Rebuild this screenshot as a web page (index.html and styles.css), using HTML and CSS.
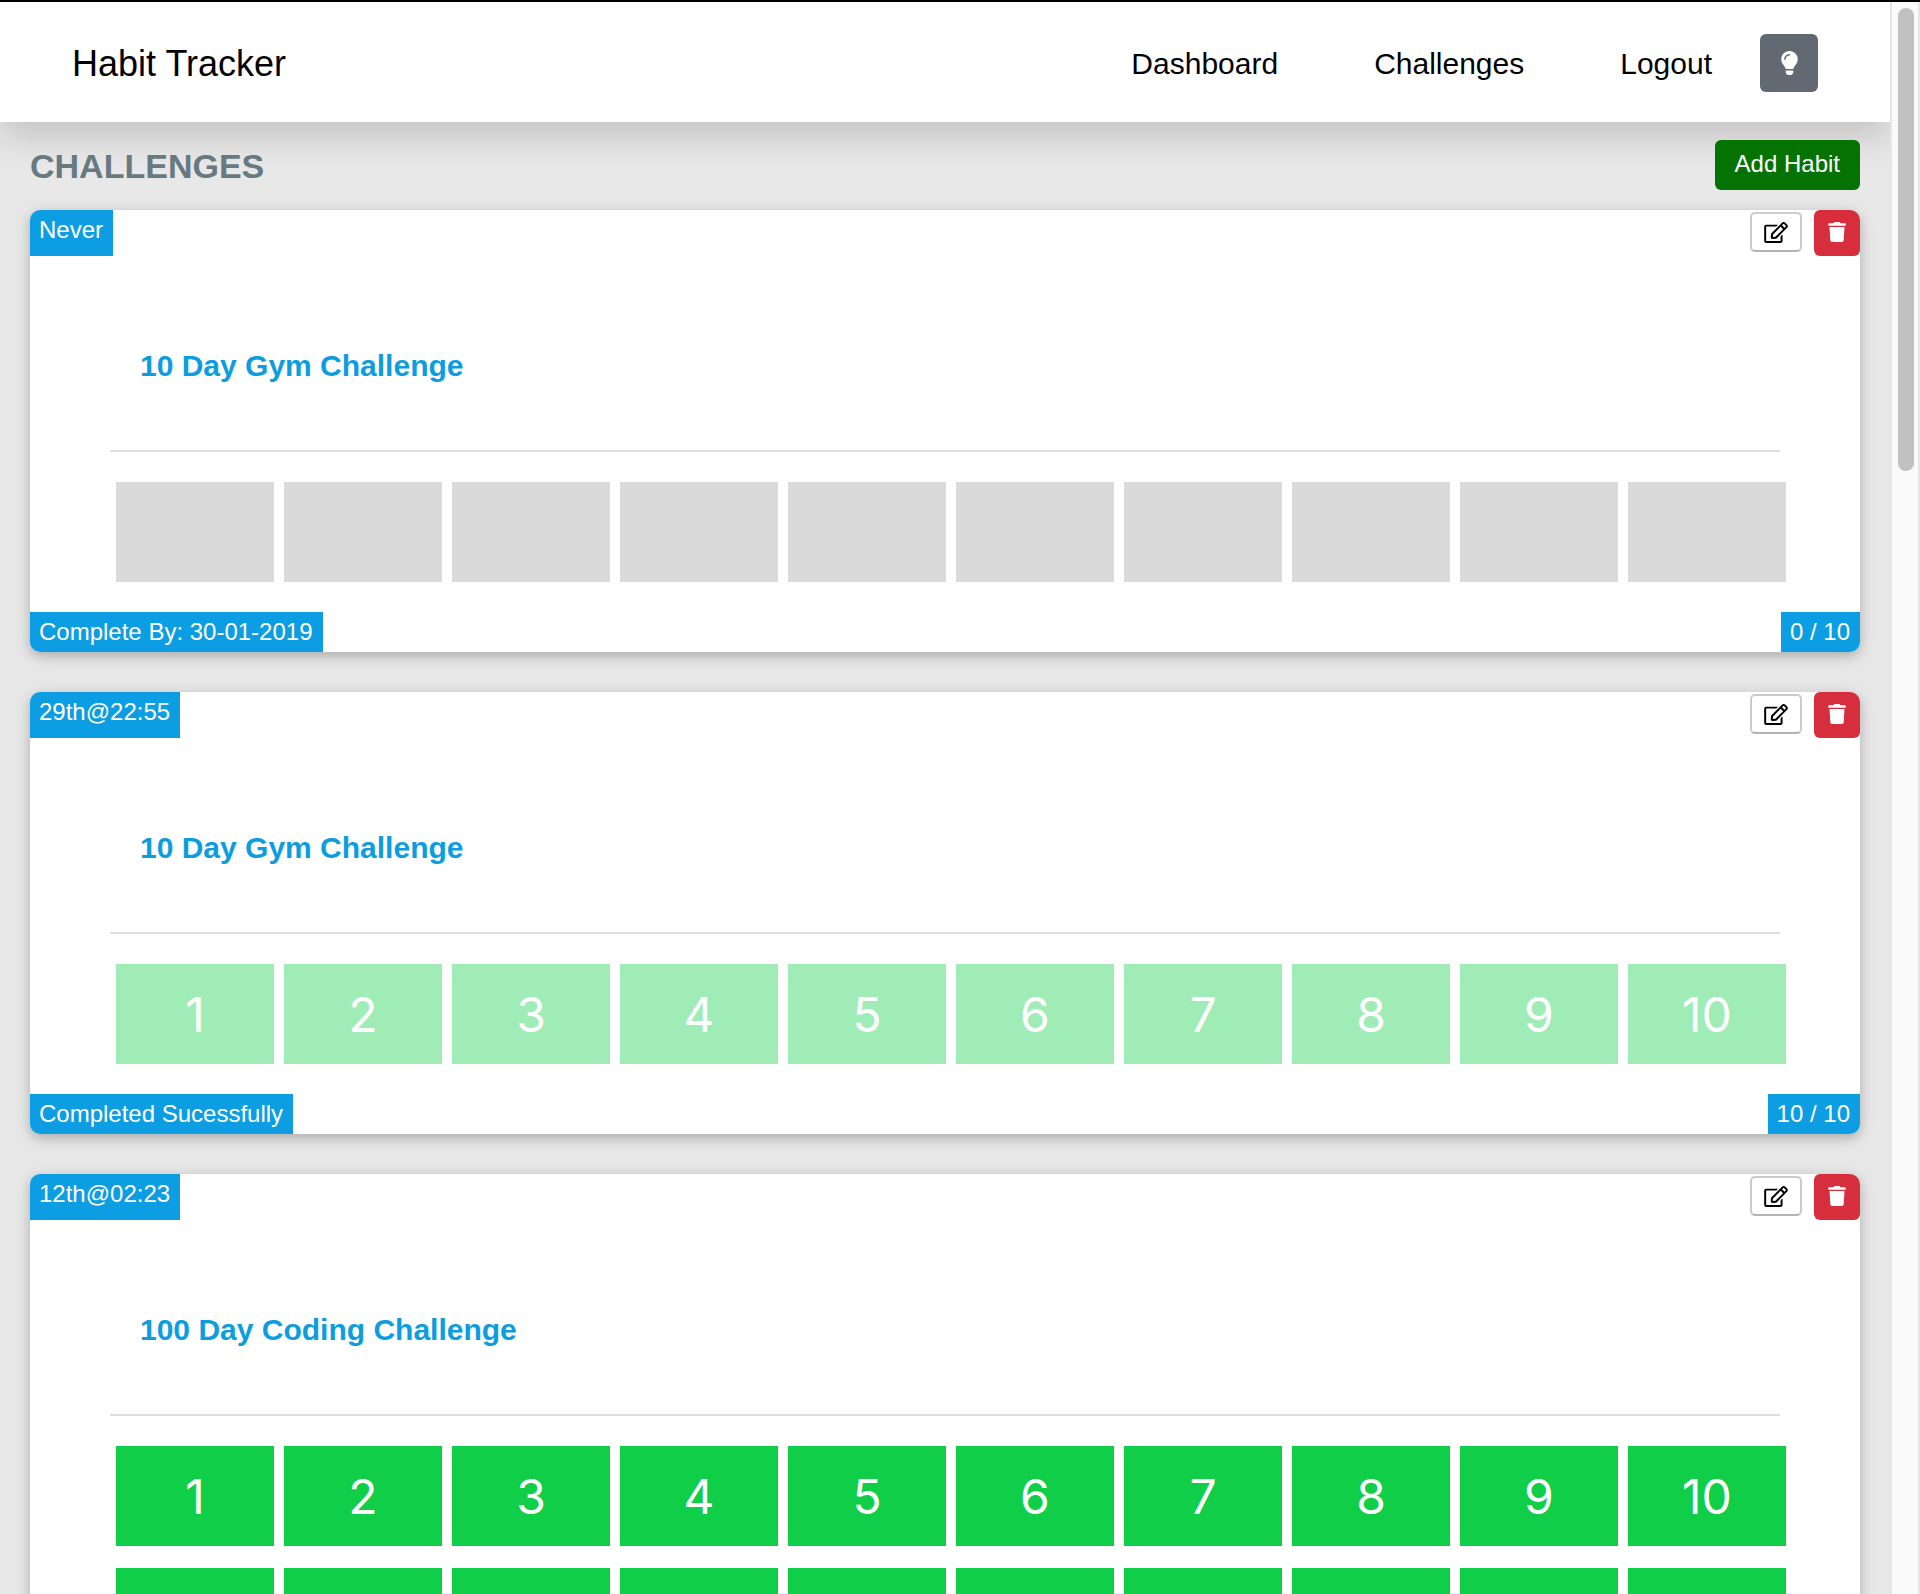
FILE: index.html
```
<!DOCTYPE html>
<html lang="en">
<head>
<meta charset="utf-8">
<title>Habit Tracker</title>
<link rel="stylesheet" href="styles.css">
</head>
<body>
<svg class="sprite" aria-hidden="true">
  <symbol id="icon-bulb" viewBox="0 0 352 512"><path d="M96.06 454.35c.01 6.29 1.87 12.45 5.36 17.69l17.09 25.69a31.99 31.99 0 0 0 26.64 14.28h61.71a31.99 31.99 0 0 0 26.64-14.28l17.09-25.69a31.989 31.989 0 0 0 5.36-17.69l.04-38.35H96.01l.05 38.35zM0 176c0 44.37 16.45 84.85 43.56 115.78 16.52 18.85 42.36 58.23 52.21 91.45.04.26.07.52.11.78h160.24c.04-.26.07-.51.11-.78 9.85-33.22 35.69-72.6 52.21-91.45C335.55 260.85 352 220.37 352 176 352 78.61 272.91-.3 175.45 0 73.44.31 0 82.97 0 176zm176-80c-44.11 0-80 35.89-80 80 0 8.84-7.16 16-16 16s-16-7.16-16-16c0-61.76 50.24-112 112-112 8.84 0 16 7.16 16 16s-7.16 16-16 16z"/></symbol>
  <symbol id="icon-edit" viewBox="0 0 576 512"><path d="M402.3 344.9l32-32c5-5 13.7-1.5 13.7 5.7V464c0 26.5-21.5 48-48 48H48c-26.5 0-48-21.5-48-48V112c0-26.5 21.5-48 48-48h273.5c7.1 0 10.7 8.6 5.7 13.7l-32 32c-1.5 1.5-3.5 2.3-5.7 2.3H48v352h352V350.5c0-2.1.8-4.1 2.3-5.6zm156.6-201.8L296.3 405.7l-90.4 10c-26.2 2.9-48.5-19.2-45.6-45.6l10-90.4L432.9 17.1c22.9-22.9 59.9-22.9 82.7 0l43.2 43.2c22.9 22.9 22.9 60 .1 82.8zM460.1 174L402 115.9 216.2 301.8l-7.3 65.3 65.3-7.3L460.1 174zm64.8-79.7l-43.2-43.2c-4.1-4.1-10.8-4.1-14.8 0L436 82l58.1 58.1 30.9-30.9c4-4.2 4-10.8-.1-14.9z"/></symbol>
  <symbol id="icon-trash" viewBox="0 0 448 512"><path d="M432 32H312l-9.4-18.7A24 24 0 0 0 281.1 0H166.8a23.72 23.72 0 0 0-21.4 13.3L136 32H16A16 16 0 0 0 0 48v32a16 16 0 0 0 16 16h416a16 16 0 0 0 16-16V48a16 16 0 0 0-16-16zM53.2 467a48 48 0 0 0 47.9 45h245.8a48 48 0 0 0 47.9-45L416 128H32z"/></symbol>
</svg>
<div class="app">
  <div class="view">
    <header class="navbar">
      <a class="brand" href="#">Habit Tracker</a>
      <nav class="nav">
        <a class="nav-link" href="#">Dashboard</a>
        <a class="nav-link" href="#">Challenges</a>
        <a class="nav-link" href="#">Logout</a>
        <button class="theme-button" type="button" aria-label="Toggle theme"><svg class="icon-bulb"><use href="#icon-bulb"/></svg></button>
      </nav>
    </header>
    <main class="content">
      <div class="heading-row">
        <h1 class="heading">CHALLENGES</h1>
        <button class="add-button" type="button">Add Habit</button>
      </div>

      <article class="card">
        <div class="card-top">
          <span class="tag tag-top">Never</span>
          <div class="actions">
            <button class="edit-button" type="button" aria-label="Edit"><svg class="icon-edit"><use href="#icon-edit"/></svg></button>
            <button class="delete-button" type="button" aria-label="Delete"><svg class="icon-trash"><use href="#icon-trash"/></svg></button>
          </div>
        </div>
        <h2 class="card-title">10 Day Gym Challenge</h2>
        <div class="days">
          <div class="day"></div><div class="day"></div><div class="day"></div><div class="day"></div><div class="day"></div>
          <div class="day"></div><div class="day"></div><div class="day"></div><div class="day"></div><div class="day"></div>
        </div>
        <div class="card-bottom">
          <span class="tag">Complete By: 30-01-2019</span>
          <span class="tag">0 / 10</span>
        </div>
      </article>

      <article class="card">
        <div class="card-top">
          <span class="tag tag-top">29th@22:55</span>
          <div class="actions">
            <button class="edit-button" type="button" aria-label="Edit"><svg class="icon-edit"><use href="#icon-edit"/></svg></button>
            <button class="delete-button" type="button" aria-label="Delete"><svg class="icon-trash"><use href="#icon-trash"/></svg></button>
          </div>
        </div>
        <h2 class="card-title">10 Day Gym Challenge</h2>
        <div class="days days-finished">
          <div class="day">1</div><div class="day">2</div><div class="day">3</div><div class="day">4</div><div class="day">5</div>
          <div class="day">6</div><div class="day">7</div><div class="day">8</div><div class="day">9</div><div class="day">10</div>
        </div>
        <div class="card-bottom">
          <span class="tag">Completed Sucessfully</span>
          <span class="tag">10 / 10</span>
        </div>
      </article>

      <article class="card">
        <div class="card-top">
          <span class="tag tag-top">12th@02:23</span>
          <div class="actions">
            <button class="edit-button" type="button" aria-label="Edit"><svg class="icon-edit"><use href="#icon-edit"/></svg></button>
            <button class="delete-button" type="button" aria-label="Delete"><svg class="icon-trash"><use href="#icon-trash"/></svg></button>
          </div>
        </div>
        <h2 class="card-title">100 Day Coding Challenge</h2>
        <div class="days days-active">
          <div class="day">1</div><div class="day">2</div><div class="day">3</div><div class="day">4</div><div class="day">5</div>
          <div class="day">6</div><div class="day">7</div><div class="day">8</div><div class="day">9</div><div class="day">10</div>
          <div class="day"></div><div class="day"></div><div class="day"></div><div class="day"></div><div class="day"></div>
          <div class="day"></div><div class="day"></div><div class="day"></div><div class="day"></div><div class="day"></div>
        </div>
      </article>
    </main>
  </div>
  <div class="scroll-track"><div class="scroll-thumb"></div></div>
</div>
</body>
</html>
```
FILE: styles.css
```
* {
  box-sizing: border-box;
}

body {
  margin: 0;
  background: #e8e8e8;
  font-family: "Liberation Sans", Arial, sans-serif;
}

button {
  margin: 0;
  padding: 0;
  border: 0;
  font-family: inherit;
}

.sprite {
  display: none;
}

.app {
  display: flex;
  height: 100vh;
  border-top: 2px solid #000;
  overflow: hidden;
}

.view {
  flex: 1;
  min-width: 0;
  overflow: hidden;
}

/* Navigation */
.navbar {
  display: flex;
  align-items: center;
  justify-content: space-between;
  height: 120px;
  padding: 2px 72px 0;
  background: #fff;
  box-shadow: 0 16px 32px rgba(0, 0, 0, 0.15);
}

.brand {
  padding-top: 2px;
  color: #000;
  font-size: 36px;
  line-height: 44px;
  text-decoration: none;
}

.nav {
  display: flex;
  align-items: center;
}

.nav-link {
  padding: 2px 48px 0;
  color: #000;
  font-size: 30px;
  line-height: 44px;
  text-decoration: none;
}

.theme-button {
  display: flex;
  align-items: center;
  justify-content: center;
  width: 58px;
  height: 58px;
  border-radius: 6px;
  background: #626972;
  color: #fff;
}

.icon-bulb {
  width: 17px;
  height: 24px;
  fill: currentColor;
}

/* Page heading */
.content {
  padding: 18px 30px 40px;
}

.heading-row {
  display: flex;
  align-items: center;
  justify-content: space-between;
  margin-bottom: 20px;
}

.heading {
  margin: 0;
  padding-top: 2px;
  color: #687980;
  font-size: 34px;
  line-height: 48px;
}

.add-button {
  height: 50px;
  padding: 0 20px 2px;
  border-radius: 6px;
  background: #057303;
  color: #fff;
  font-size: 24px;
}

/* Challenge cards */
.card {
  margin-bottom: 40px;
  border-radius: 10px;
  background: #fff;
  box-shadow: 0 4px 10px rgba(0, 0, 0, 0.16), 0 4px 20px rgba(0, 0, 0, 0.12);
  overflow: hidden;
}

.card-top,
.card-bottom {
  display: flex;
  justify-content: space-between;
}

.tag {
  padding: 0 10px 0 9px;
  background: #0c9de2;
  color: #fff;
  font-size: 24px;
  line-height: 40px;
}

.tag-top {
  padding-bottom: 6px;
}

.actions {
  display: flex;
  gap: 12px;
}

.edit-button {
  display: flex;
  align-items: center;
  justify-content: center;
  width: 52px;
  height: 40px;
  margin-top: 2px;
  border: 2px solid #ccc;
  border-bottom-color: #b3b3b3;
  border-radius: 5px;
  background: #fff;
  color: #000;
}

.icon-edit {
  width: 24px;
  height: 21px;
  fill: currentColor;
}

.delete-button {
  display: flex;
  align-items: center;
  justify-content: center;
  width: 46px;
  height: 46px;
  padding-bottom: 2px;
  border-radius: 6px;
  background: #d72e3d;
  color: #fff;
}

.icon-trash {
  width: 18px;
  height: 20px;
  fill: currentColor;
}

.card-title {
  margin: 0 80px;
  padding: 91px 30px 65px;
  border-bottom: 2px solid #dedede;
  color: #0c9de0;
  font-size: 30px;
  line-height: 38px;
}

.days {
  display: grid;
  grid-template-columns: repeat(10, 1fr);
  gap: 22px 10px;
  padding: 30px 74px 30px 86px;
}

.day {
  height: 100px;
  background: #dadada;
  color: #fff;
  font-family: Inter, sans-serif;
  font-size: 48px;
  font-weight: 400;
  line-height: 102px;
  text-align: center;
}

.days-finished .day {
  background: #a0ecb6;
}

.days-active .day {
  background: #11ce48;
}

/* Scroll bar */
.scroll-track {
  width: 30px;
  padding: 6px 4px 6px 6px;
  border: solid #e6e6e6;
  border-width: 0 2px;
  background: #fafafa;
}

.scroll-thumb {
  height: 29.3%;
  border-radius: 8px;
  background: #c1c1c1;
}
```
